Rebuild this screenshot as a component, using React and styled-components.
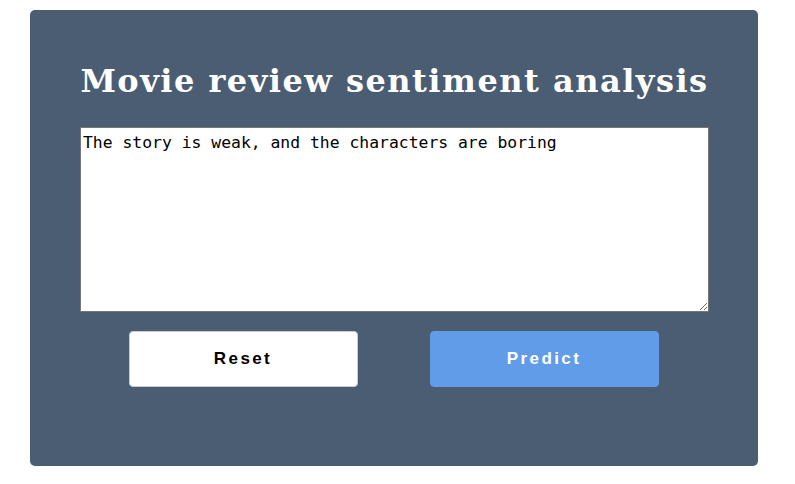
import React, { useState } from 'react';
import styled, { createGlobalStyle } from 'styled-components';

const GlobalStyle = createGlobalStyle`
    body {
        margin: 0;
        background: #ffffff;
        font-family: "DejaVu Serif", serif;
    }
`;

const Page = styled.div`
    padding: 10px 37px 0 30px;
`;

const Card = styled.div`
    box-sizing: border-box;
    width: 728px;
    height: 456px;
    padding: 34px 49px 0 50px;
    background-color: #4b5d73;
    border-radius: 5px;
    display: flex;
    flex-direction: column;
    align-items: center;
`;

const Title = styled.h1`
    margin: 18px 0 27px;
    font-family: "DejaVu Serif", serif;
    font-size: 32px;
    font-weight: bold;
    letter-spacing: 1.5px;
    color: #ffffff;
    text-align: center;
`;

const ReviewInput = styled.textarea`
    box-sizing: border-box;
    width: 629px;
    height: 185px;
    padding: 5px 2px 2px;
    border: 1px solid #767676;
    font-family: "DejaVu Sans Mono", monospace;
    font-size: 16.4px;
    color: #000000;
    background: #ffffff;
`;

const ButtonRow = styled.div`
    display: flex;
    justify-content: center;
    gap: 72px;
    margin: 19px 2px 0 0;
`;

const ActionButton = styled.button`
    box-sizing: border-box;
    width: 229px;
    height: 56px;
    border-radius: 4px;
    border: 1px solid ${(p) => (p.primary ? '#619ce9' : '#c9ccd1')};
    background-color: ${(p) => (p.primary ? '#619ce9' : '#ffffff')};
    color: ${(p) => (p.primary ? '#ffffff' : '#000000')};
    font-family: "Liberation Sans", Arial, sans-serif;
    font-size: 17px;
    font-weight: bold;
    letter-spacing: 2.4px;
    cursor: pointer;
`;

const App = () => {
    const [review, setReview] = useState('The story is weak, and the characters are boring');

    return (
        <Page>
            <GlobalStyle />
            <Card>
                <Title>Movie review sentiment analysis</Title>
                <ReviewInput value={review} onChange={(e) => setReview(e.target.value)} />
                <ButtonRow>
                    <ActionButton onClick={() => setReview('')}>Reset</ActionButton>
                    <ActionButton primary>Predict</ActionButton>
                </ButtonRow>
            </Card>
        </Page>
    );
};

export default App;
